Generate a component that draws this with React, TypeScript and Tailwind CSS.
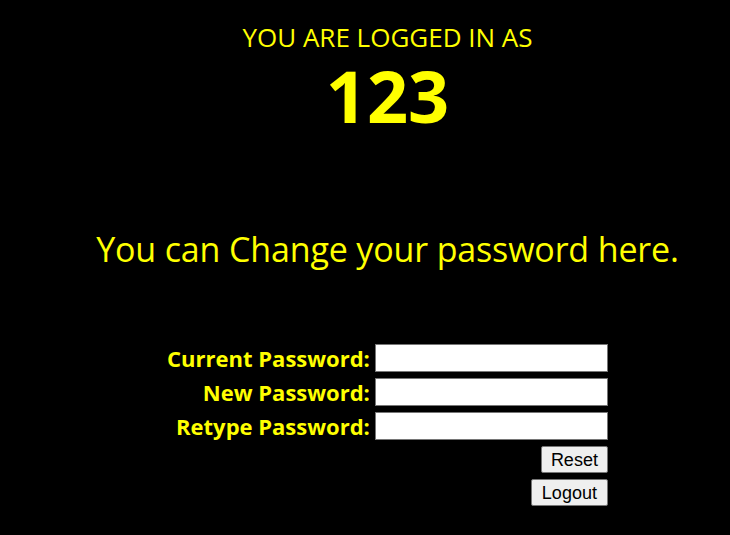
export default function App() {
  const rows = ['Current Password:', 'New Password:', 'Retype Password:']

  return (
    <div className="min-h-[535px] w-full bg-black pl-[45px] text-[#ffff00] [font-family:'Open_Sans',sans-serif]">
      <div className="flex flex-col items-center">
        <h2 className="mt-[24px] text-[26px] leading-[26px]">YOU ARE LOGGED IN AS</h2>
        <h1 className="mt-[5px] text-[72px] font-bold leading-[80px]">123</h1>
        <p className="mt-[94px] text-[34px] leading-[40px] tracking-[-0.15px]">You can Change your password here.</p>

        <form className="mt-[75px] flex flex-col items-end">
          {rows.map((label, i) => (
            <div key={label} className={`flex items-center ${i > 0 ? 'mt-[6px]' : ''}`}>
              <label className="mr-[5px] text-[22px] font-bold leading-[28px]">{label}</label>
              <input
                type="password"
                className="h-[28px] w-[233px] border border-[#767676] bg-white text-black"
              />
            </div>
          ))}
          <button
            type="button"
            className="mt-[6px] h-[27px] w-[67px] rounded-[2px] border border-[#767676] bg-[#efefef] text-[18px] leading-none text-black [font-family:'Liberation_Sans',Arial,sans-serif]"
          >
            Reset
          </button>
          <button
            type="button"
            className="mt-[6px] h-[27px] w-[77px] rounded-[2px] border border-[#767676] bg-[#efefef] text-[18px] leading-none text-black [font-family:'Liberation_Sans',Arial,sans-serif]"
          >
            Logout
          </button>
        </form>
      </div>
    </div>
  )
}
